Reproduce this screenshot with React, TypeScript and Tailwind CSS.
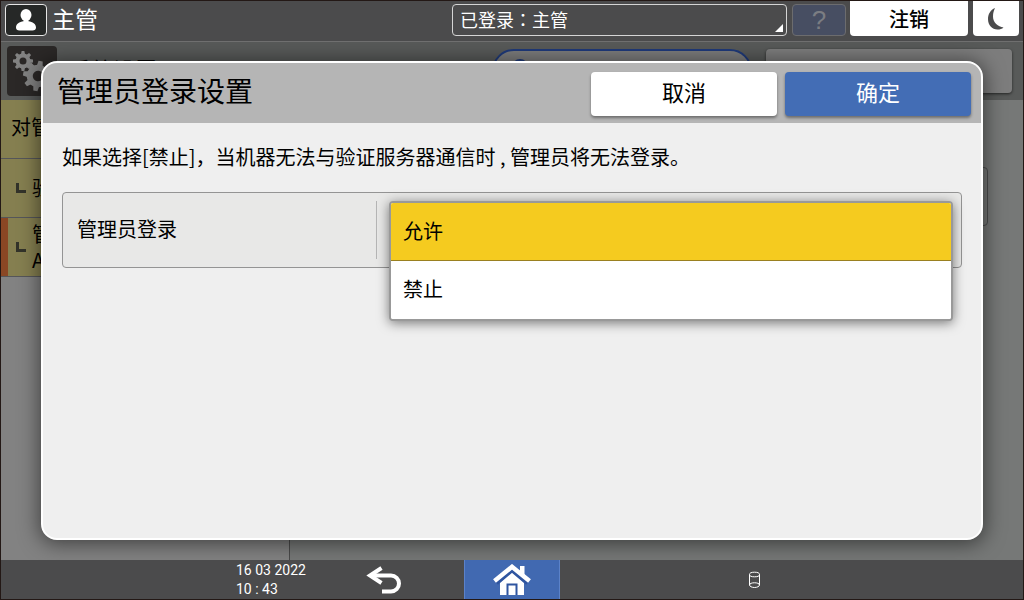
import { useState } from 'react'

const LOGIN_OPTIONS = ['允许', '禁止']

const GEAR_ANGLES = [0, 45, 90, 135, 180, 225, 270, 315]

function Gear({ x, y, r, turn }: { x: number; y: number; r: number; turn: number }) {
  return (
    <g transform={`translate(${x} ${y}) rotate(${turn})`}>
      <circle r={r * 0.55} fill="none" stroke="currentColor" strokeWidth={r * 0.4} />
      {GEAR_ANGLES.map((angle) => (
        <path
          key={angle}
          transform={`rotate(${angle})`}
          d={`M${-r * 0.2} ${-r * 0.65}L${-r * 0.14} ${-r}H${r * 0.14}L${r * 0.2} ${-r * 0.65}Z`}
          fill="currentColor"
        />
      ))}
    </g>
  )
}

function UserIcon() {
  return (
    <svg width="22" height="24" viewBox="0 0 22 24" fill="#fff" aria-hidden="true">
      <ellipse cx="11" cy="7" rx="5.5" ry="6" />
      <path d="M8.5 11h5v2.2c4 .6 7.500 2.600 7.500 6.300 0 2-1.200 3-3.500 3H4.500c-2.300 0-3.500-1-3.500-3 0-3.700 3.500-5.700 7.500-6.300z" />
    </svg>
  )
}

function MoonIcon() {
  return (
    <svg width="18" height="24" viewBox="0 0 18 24" aria-hidden="true">
      <path d="M8 1C3.500 3 1 7 1 12c0 6 4 10.500 9.500 10.500 2.500 0 4.500-.5 6-2C11 19.500 6 16 6 9.500 6 6 6.800 3.500 8 1z" fill="#4b4b4c" />
    </svg>
  )
}

function BackIcon() {
  return (
    <svg width="38" height="28" viewBox="0 0 38 28" fill="none" stroke="#fff" aria-hidden="true">
      <path d="M6 9.500H26a8 8 0 0 1 0 16H17" strokeWidth="4" />
      <path d="M16.500 2L5 9.500l11.500 7.500" strokeWidth="4" />
    </svg>
  )
}

function HomeIcon() {
  return (
    <svg width="38" height="32" viewBox="0 0 38 32" aria-hidden="true">
      <path d="M27 2h4.500v11l-4.500-4z" fill="#fff" />
      <path d="M19 8L7 18.500V31h24V18.500z" fill="#fff" />
      <path d="M3 18.500L19 5l16 13.500" fill="none" stroke="#2f55a0" strokeWidth="6" />
      <path d="M1.500 17L19 2.800 36.500 17" fill="none" stroke="#fff" strokeWidth="4.500" />
      <path d="M14.500 31V20.500h9V31" fill="#fff" stroke="#2f55a0" strokeWidth="2" />
    </svg>
  )
}

function StorageIcon() {
  return (
    <svg width="13" height="18" viewBox="0 0 13 18" fill="none" stroke="#fff" aria-hidden="true">
      <ellipse cx="6.500" cy="3.500" rx="5" ry="2.300" />
      <path d="M1.500 3.500v10.500c0 1.300 2.200 2.500 5 2.500s5-1.200 5-2.500V3.500" />
      <path d="M1.500 14c0-3 10-3 10 0" />
    </svg>
  )
}

function BranchMark() {
  return <span className="ml-[9px] size-[10px] shrink-0 border-b-3 border-l-3 border-[#33332a]" />
}

function TopBar() {
  return (
    <header className="flex h-[41px] shrink-0 border-b border-[#6f6f6f] bg-[#4b4b4c] pr-1 pl-1">
      <div className="flex flex-1 items-start gap-[5px] pt-[3px]">
        <span className="flex h-8 w-[42px] items-center justify-center rounded border border-[#e6e6e6] bg-[#262827]">
          <UserIcon />
        </span>
        <span className="text-[23px] leading-7 text-white">主管</span>
      </div>
      <div className="flex items-start">
        <div className="relative mt-[3px] mr-[5px]">
          <select
            aria-label="登录用户"
            className="h-8 w-[335px] appearance-none rounded-sm border border-[#d5d5d5] bg-transparent pb-[3px] pl-[7px] font-['Noto_Sans_CJK_TC',sans-serif] text-[18px] leading-7 text-white"
          >
            <option>已登录：主管</option>
          </select>
          <svg className="pointer-events-none absolute right-1 bottom-1" width="8" height="8" aria-hidden="true">
            <path d="M8 0v8H0z" fill="#fff" />
          </svg>
        </div>
        <button
          disabled
          className="mt-[3px] mr-1 h-8 w-[54px] rounded-sm border border-[#6c6c6e] bg-[#474e62] font-['Liberation_Sans',sans-serif] text-[26px] leading-7 text-[#7b7d82]"
        >
          ?
        </button>
        <button className="mr-[5px] h-[35px] w-[118px] rounded-b-sm bg-white text-[20px] leading-8 font-medium text-black">
          注销
        </button>
        <button aria-label="睡眠" className="flex h-[35px] w-[46px] items-center justify-center rounded-b-sm bg-white">
          <MoonIcon />
        </button>
      </div>
    </header>
  )
}

function SettingsPage() {
  return (
    <div className="flex flex-1 flex-col bg-[#767877] text-black">
      <div className="flex h-[58px] shrink-0 items-start bg-[#585a59] pr-[11px] pl-[6px]">
        <span className="mt-1 size-[50px] rounded bg-[#2b2827] text-[#828282]">
          <svg width="50" height="50" viewBox="0 0 50 50" aria-hidden="true">
            <Gear x={16} y={15} r={10} turn={0} />
            <Gear x={31} y={30} r={15} turn={10} />
          </svg>
        </span>
        <h1 className="mt-[10px] ml-3 flex-1 text-[22px] leading-8">系统设置</h1>
        <div className="mt-[7px] mr-[14px] flex h-11 w-[260px] items-start rounded-full border-2 border-[#1f3a7a] bg-[#7d7d7d] pt-2 pl-[18px]">
          <span className="size-4 rounded-full border-2 border-[#1f3a7a]" />
          <input type="search" aria-label="搜索" className="min-w-0 flex-1 bg-transparent" />
        </div>
        <button aria-label="菜单" className="mt-[7px] h-11 w-[246px] rounded-sm bg-[#7d7d7d] shadow-[0_1px_3px_rgba(0,0,0,0.6)]" />
      </div>
      <div className="flex flex-1">
        <nav className="w-[289px] border-r border-[#4a4a4a] bg-[#828282] text-[20px] leading-7">
          <a href="#admin" className="flex h-[59px] items-center border-b border-[#55565a] bg-[#857f50] pb-1 pl-[10px]">
            对管
          </a>
          <a href="#verify" className="flex h-[59px] items-center gap-[6px] border-b border-[#55565a] bg-[#857f50] pl-[6px]">
            <BranchMark />
            验
          </a>
          <a href="#login" className="flex h-[59px] items-center gap-[6px] border-b border-[#55565a] bg-[#857f50]">
            <span className="-mr-[7px] h-full w-[7px] bg-[#8a4724]" />
            <BranchMark />
            <span className="leading-[26px]">
              管<br />A
            </span>
          </a>
        </nav>
        <div className="flex-1 pt-[67px] pr-[35px] pl-5">
          <div className="h-[59px] rounded-sm border border-[#4c4d4d]" />
        </div>
      </div>
    </div>
  )
}

function LoginDialog() {
  const [selected, setSelected] = useState(LOGIN_OPTIONS[0])

  return (
    <section
      role="dialog"
      aria-labelledby="dialog-title"
      className="flex flex-1 flex-col rounded-2xl border-2 border-white bg-[#efefef] text-black shadow-[0_2px_20px_2px_rgba(0,0,0,0.5)]"
    >
      <div className="flex h-[60px] shrink-0 items-start gap-2 rounded-t-[14px] bg-[#b5b5b5] pt-[9px] pr-[10px] pl-[14px]">
        <h2 id="dialog-title" className="flex-1 text-[28px] leading-9">
          管理员登录设置
        </h2>
        <button className="h-11 w-[186px] rounded bg-white pb-[6px] text-[22px] leading-8 shadow-[0_2px_3px_rgba(0,0,0,0.4)]">
          取消
        </button>
        <button className="h-11 w-[186px] rounded bg-[#436db5] pb-[6px] text-[22px] leading-8 text-white shadow-[0_2px_3px_rgba(0,0,0,0.4)]">
          确定
        </button>
      </div>
      <div className="pt-5 pr-[19px] pl-[19px]">
        <p className="text-[20px] leading-7">
          如果选择[禁止]，当机器无法与验证服务器通信时 , 管理员将无法登录。
        </p>
        <div className="mt-[21px] flex h-[76px] rounded border border-[#949494] bg-[#e8e8e7] py-2 pr-2">
          <label htmlFor="admin-login" className="w-[314px] border-r border-[#b5b5b5] pt-[14px] pl-[14px] text-[20px] leading-7">
            管理员登录
          </label>
          <div className="relative ml-3 flex-1">
            <select
              id="admin-login"
              value={selected}
              onChange={(e) => setSelected(e.target.value)}
              className="h-full w-full appearance-none rounded bg-white px-3 text-[20px]"
            >
              {LOGIN_OPTIONS.map((option) => (
                <option key={option}>{option}</option>
              ))}
            </select>
            <div
              role="listbox"
              aria-label="管理员登录"
              className="absolute inset-x-0 top-0 overflow-hidden rounded border-2 border-[#999] bg-white shadow-[0_2px_12px_rgba(0,0,0,0.5)]"
            >
              {LOGIN_OPTIONS.map((option) => (
                <button
                  key={option}
                  role="option"
                  aria-selected={option === selected}
                  onClick={() => setSelected(option)}
                  className={
                    option === selected
                      ? 'block h-[58px] w-full border-b border-[#9a8020] bg-[#f5cb1f] px-3 pb-[2px] text-left text-[20px] leading-7'
                      : 'block h-[58px] w-full bg-white px-3 pb-[2px] text-left text-[20px] leading-7'
                  }
                >
                  {option}
                </button>
              ))}
            </div>
          </div>
        </div>
      </div>
    </section>
  )
}

function BottomBar() {
  return (
    <footer className="grid h-[39px] shrink-0 grid-cols-[1fr_96px_1fr] bg-[#4b4b4c] text-white">
      <div className="flex justify-end pr-8">
        <p className="w-[100px] pt-px font-['Roboto',sans-serif] text-[14px] leading-[19px]">
          16 03 2022
          <br />
          10 : 43
        </p>
        <button aria-label="返回" className="flex w-24 items-center justify-center">
          <BackIcon />
        </button>
      </div>
      <button aria-label="主页" className="flex items-end justify-center border-x border-[#5b82c9] bg-[#4169b1] pb-[3px]">
        <HomeIcon />
      </button>
      <div className="flex pl-[146px]">
        <button aria-label="存储" className="flex w-24 items-center justify-center">
          <StorageIcon />
        </button>
      </div>
    </footer>
  )
}

export default function App() {
  return (
    <div className="flex min-h-screen flex-col border border-[#231815] bg-[#767877] font-['Noto_Sans_CJK_SC',sans-serif]">
      <TopBar />
      <main className="relative flex flex-1 flex-col overflow-hidden">
        <SettingsPage />
        <div className="absolute inset-0 flex px-10 pt-[19px] pb-5">
          <LoginDialog />
        </div>
      </main>
      <BottomBar />
    </div>
  )
}
